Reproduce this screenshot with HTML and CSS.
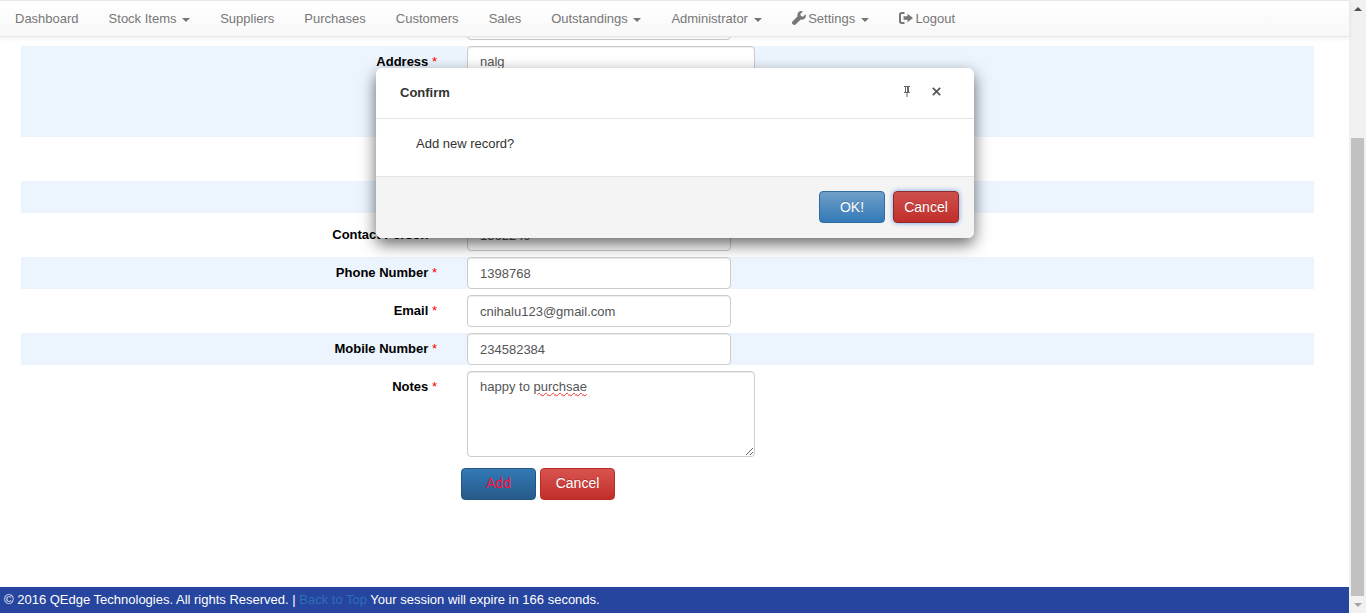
FILE: index.html
```html
<!DOCTYPE html>
<html lang="en">
<head>
  <meta charset="UTF-8">
  <title>Add Customer</title>
  <link rel="stylesheet" href="styles.css">
</head>
<body>
<div class="page">
  <nav class="navbar">
    <a href="#">Dashboard</a>
    <a href="#">Stock Items <span class="caret"></span></a>
    <a href="#">Suppliers</a>
    <a href="#">Purchases</a>
    <a href="#">Customers</a>
    <a href="#">Sales</a>
    <a href="#">Outstandings <span class="caret"></span></a>
    <a href="#">Administrator <span class="caret"></span></a>
    <a href="#">
      <svg class="icon" viewBox="0 0 14 14"><path d="M13.6 3.2 11 5.700 8.900 5.100 8.300 3 10.800.4C9.300-.2 7.600.1 6.500 1.200 5.400 2.300 5.100 3.900 5.600 5.300L.5 10.400C-.2 11.100-.2 12.200.5 12.900l.6.6c.7.7 1.800.7 2.500 0L8.700 8.400C10.100 8.900 11.700 8.600 12.800 7.500 13.900 6.400 14.200 4.700 13.600 3.200Z"/></svg>
      Settings <span class="caret"></span></a>
    <a href="#">
      <svg class="icon" viewBox="0 0 14 14"><path d="M5.500 1H2.500C1.100 1 0 2.100 0 3.500v7C0 11.900 1.100 13 2.500 13h3V11H2.800C2.300 11 2 10.700 2 10.200V3.800C2 3.300 2.300 3 2.800 3h2.700Z"/><path d="M8.500 2.800V5.300H4.500V8.700H8.500V11.200L14 7Z"/></svg>
      Logout</a>
  </nav>

  <main class="content">
    <form class="form">
      <div class="row">
        <label></label>
        <input class="field" type="text">
      </div>
      <div class="row band">
        <label>Address <em>*</em></label>
        <textarea class="field wide address">nalg</textarea>
      </div>
      <div class="row">
        <label></label>
        <input class="field" type="text">
      </div>
      <div class="row band">
        <label></label>
        <input class="field" type="text">
      </div>
      <div class="row">
        <label>Contact Person <em>*</em></label>
        <input class="field" type="text" value="1562249">
      </div>
      <div class="row band">
        <label>Phone Number <em>*</em></label>
        <input class="field" type="text" value="1398768">
      </div>
      <div class="row">
        <label>Email <em>*</em></label>
        <input class="field" type="text" value="cnihalu123@gmail.com">
      </div>
      <div class="row band">
        <label>Mobile Number <em>*</em></label>
        <input class="field" type="text" value="234582384">
      </div>
      <div class="row">
        <label>Notes <em>*</em></label>
        <div class="field wide notes" role="textbox">happy to <span class="misspelt">purchsae</span></div>
      </div>
      <div class="actions">
        <button type="button" class="btn btn-primary add">Add</button>
        <button type="button" class="btn btn-danger">Cancel</button>
      </div>
    </form>
  </main>

  <footer class="footer">
    © 2016 QEdge Technologies. All rights Reserved. | <a href="#">Back to Top</a> Your session will expire in 166 seconds.
  </footer>
</div>

<div class="scrollbar">
  <span class="arrow up"></span>
  <div class="track"><div class="thumb"></div></div>
  <span class="arrow down"></span>
</div>

<div class="dialog">
  <div class="dialog-header">
    <span class="dialog-title">Confirm</span>
    <svg class="pin" viewBox="0 0 8 11"><path d="M1 0H7V1H6V5.500L7 6.500V7H4.500V11H3.500V7H1V6.500L2 5.500V1H1ZM3 1V6H4V1Z"/></svg>
    <svg class="close" viewBox="0 0 9 9"><path d="M1.400.2 4.500 3.300 7.600.2 8.800 1.400 5.700 4.500 8.800 7.600 7.600 8.800 4.500 5.700 1.400 8.800.2 7.600 3.300 4.500.2 1.400Z"/></svg>
  </div>
  <div class="dialog-body">Add new record?</div>
  <div class="dialog-footer">
    <button type="button" class="btn btn-ok">OK!</button>
    <button type="button" class="btn btn-no">Cancel</button>
  </div>
</div>
</body>
</html>
```

FILE: styles.css
```css
* { box-sizing: border-box; }
html, body { height: 100%; margin: 0; overflow: hidden; }
body { display: flex; background: #fff; color: #333; font-family: "Liberation Sans", Arial, sans-serif; font-size: 13px; line-height: 20px; }

.page { flex: 1; min-width: 0; display: flex; flex-direction: column; height: 613px; }

.navbar { position: relative; z-index: 2; flex: none; display: flex; height: 37px; padding-top: 1px; background: linear-gradient(to bottom, #fff, #f8f8f8); border-top: 1px solid #e7e7e7; border-bottom: 1px solid #e7e7e7; box-shadow: 0 1px 5px rgba(0,0,0,.08); }
.navbar a { display: block; padding: 7px 15px 5px; color: #777; text-decoration: none; white-space: nowrap; }
.caret { display: inline-block; width: 0; height: 0; margin-left: 2px; vertical-align: middle; border-top: 4px solid #777; border-left: 4px solid transparent; border-right: 4px solid transparent; }
.icon { width: 14px; height: 14px; margin-right: -1px; fill: #777; vertical-align: -2px; }

.content { flex: 1; min-height: 0; overflow: hidden; padding: 0 35px 0 21px; }
.form { margin-top: -29px; }
.row { display: flex; margin-bottom: 6px; }
.band { background: #ecf5fe; }
.row label { flex: none; width: 416px; padding-top: 6px; text-align: right; font-weight: bold; color: #000; }
.row em { color: #f00; font-style: normal; font-weight: normal; }

.field { display: block; width: 264px; height: 32px; margin-left: 30px; padding: 6px 12px; background: #fff; color: #555; border: 1px solid #ccc; border-radius: 4px; font: inherit; box-shadow: inset 0 1px 1px rgba(0,0,0,.075); }
.wide { width: 288px; line-height: 18px; }
.address { height: 91px; }
.notes { height: 86px; resize: both; overflow: auto; }
.misspelt { text-decoration: underline wavy #e33; text-decoration-thickness: 1px; }

.actions { display: flex; gap: 4px; padding-left: 440px; margin-top: 11px; }
.btn { width: 75px; height: 32px; padding: 0; border: 1px solid transparent; border-radius: 4px; color: #fff; font: inherit; font-size: 14px; cursor: pointer; text-shadow: 0 -1px 0 rgba(0,0,0,.2); }
.btn-primary { padding-bottom: 2px; background: linear-gradient(to bottom, #337ab7, #265a88); border-color: #245580; }
.add { color: #ff0f3c; text-shadow: none; }
.btn-danger { padding-bottom: 2px; background: linear-gradient(to bottom, #d9534f, #c12e2a); border-color: #b92c28; }

.footer { flex: none; height: 26px; padding: 3px 4px; background: #26459e; color: #fff; white-space: nowrap; }
.footer a { color: #2d6fb5; text-decoration: none; }

.scrollbar { flex: none; width: 17px; height: 613px; display: flex; flex-direction: column; background: #f1f1f1; }
.track { flex: 1; padding: 138px 2px 0; margin-top: -17px; }
.thumb { height: 458px; background: #c1c1c1; }
.arrow { flex: none; height: 17px; display: flex; align-items: center; justify-content: center; }
.arrow::before { content: ""; border-left: 4px solid transparent; border-right: 4px solid transparent; }
.arrow.up::before { border-bottom: 4px solid #505050; }
.arrow.down::before { border-top: 4px solid #a3a3a3; }

/* modal lies over the form */
.dialog { position: absolute; left: 376px; top: 68px; width: 598px; height: 170px; display: flex; flex-direction: column; background: #fff; border-radius: 6px; box-shadow: 0 6px 16px rgba(0,0,0,.6); }
.dialog-header { flex: none; height: 51px; display: flex; align-items: center; padding: 0 33px 4px 24px; border-bottom: 1px solid #e5e5e5; }
.dialog-title { flex: 1; margin-top: 4px; color: #333; font-weight: bold; }
.pin { width: 8px; height: 11px; margin-right: 21px; fill: #666; }
.close { width: 9px; height: 9px; fill: #555; }
.dialog-body { flex: 1; padding: 15px 40px; color: #333; }
.dialog-footer { flex: none; height: 62px; display: flex; justify-content: flex-end; gap: 8px; padding: 14px 15px 0; background: #f4f4f4; border-top: 1px solid #e5e5e5; border-radius: 0 0 6px 6px; }
.btn-ok, .btn-no { width: 66px; }
.btn-ok { background: linear-gradient(to bottom, #6f9fc9, #337ab7); border-color: #2e6da4; }
.btn-no { background: linear-gradient(to bottom, #ce4f4b, #c12e2a); border-color: #8f2a2a; box-shadow: 0 0 5px #6f9fe6; }
```
